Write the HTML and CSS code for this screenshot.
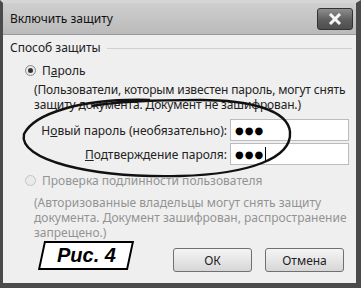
FILE: index.html
```html
<!DOCTYPE html>
<html lang="ru">
<head>
  <meta charset="UTF-8">
  <title>Включить защиту</title>
  <link rel="stylesheet" href="styles.css">
</head>
<body>
  <div class="window">
    <div class="titlebar">
      <span class="title">Включить защиту</span>
      <span class="close-btn">
        <svg width="14" height="12" viewBox="0 0 14 12">
          <path d="M2 1 L12 11 M12 1 L2 11" stroke="#f4f4f4" stroke-width="3"/>
        </svg>
      </span>
    </div>

    <div class="content">
      <div class="group-title">
        <span>Способ защиты</span>
        <span class="group-line"></span>
      </div>

      <label class="radio-row">
        <span class="radio checked"></span>
        <span>П<u>а</u>роль</span>
      </label>
      <p class="note tight">(Пользователи, которым известен пароль, могут снять защиту документа. Документ не зашифрован.)</p>

      <div class="field-row">
        <span class="field-label">Н<u>о</u>вый пароль (необязательно):</span>
        <span class="field">&#9679;&#9679;&#9679;</span>
      </div>
      <div class="field-row second">
        <span class="field-label"><u>П</u>одтверждение пароля:</span>
        <span class="field">&#9679;&#9679;&#9679;<span class="caret"></span></span>
      </div>

      <label class="radio-row disabled">
        <span class="radio"></span>
        <span>Проверка подлинности пользователя</span>
      </label>
      <p class="note disabled">(Авторизованные владельцы могут снять защиту документа. Документ зашифрован, распространение запрещено.)</p>

      <div class="footer">
        <div class="fig-label"><span>Рис. 4</span></div>
        <div class="buttons">
          <span class="btn">ОК</span>
          <span class="btn">Отмена</span>
        </div>
      </div>
    </div>

    <!-- hand-drawn ellipse around the password fields -->
    <svg class="ellipse" width="361" height="288" viewBox="0 0 361 288">
      <path d="M150 100 C80 98 34 114 24 134 C18 160 90 178 180 176 C250 174 292 158 290 132 C288 110 250 100 200 100 C160 100 120 101 92 106"
            fill="none" stroke="#111" stroke-width="2.4"/>
    </svg>
  </div>
</body>
</html>
```

FILE: styles.css
```css
body {
  margin: 0;
  background: #fff;
  font-family: 'Noto Sans', 'DejaVu Sans', sans-serif;
  font-size: 12px;
  color: #222;
}

.window {
  position: relative;
  width: 361px;
  height: 288px;
  box-sizing: border-box;
  background: #efefef;
  border: 3px solid #4a4a4a;
  border-top: 3px solid #d6d6d6;
  border-right-width: 5px;
  border-bottom-width: 5px;
  overflow: hidden;
}

.titlebar {
  height: 31px;
  display: flex;
  align-items: center;
  justify-content: space-between;
  padding: 0 3px 0 7px;
  background: linear-gradient(#cfcfcf, #bababa);
  border-bottom: 1px solid #9a9a9a;
}

.title {
  font-size: 12px;
  color: #111;
}

.close-btn {
  width: 34px;
  height: 20px;
  display: flex;
  align-items: center;
  justify-content: center;
  border: 1px solid #333;
  border-radius: 3px;
  background: linear-gradient(#8e8e8e, #5e5e5e 55%, #4e4e4e);
}

.content {
  padding: 3px 4px 0 7px;
}

.group-title {
  display: flex;
  align-items: center;
  gap: 6px;
  height: 18px;
}

.group-line {
  flex: 1;
  border-top: 1px solid #d0d0d0;
  margin-top: 2px;
}

.radio-row {
  display: flex;
  align-items: center;
  gap: 6px;
  margin: 6px 0 0 15px;
  height: 16px;
}

.radio {
  width: 11px;
  height: 11px;
  border-radius: 50%;
  border: 1px solid #8a8a8a;
  background: radial-gradient(#fff, #d8d8d8);
  box-sizing: border-box;
  position: relative;
}

.radio.checked::after {
  content: '';
  position: absolute;
  left: 2px;
  top: 2px;
  width: 5px;
  height: 5px;
  border-radius: 50%;
  background: #333;
}

.note {
  margin: 4px 0 0 24px;
  line-height: 15px;
}

.note.tight {
  letter-spacing: -0.15px;
  margin-right: -4px;
}

.disabled {
  color: #939393;
}

.disabled .radio {
  border-color: #c4c4c4;
  background: #eaeaea;
}

.field-row {
  display: flex;
  align-items: center;
  justify-content: flex-end;
  gap: 3px;
  margin: 7px 3px 0 0;
}

.field-row.second {
  margin-top: 2px;
}

.field {
  width: 119px;
  height: 22px;
  box-sizing: border-box;
  display: flex;
  align-items: center;
  padding-left: 4px;
  background: #fff;
  border: 1px solid #bcbcbc;
  font-size: 10px;
  letter-spacing: 1px;
  color: #000;
}

.caret {
  width: 1px;
  height: 14px;
  background: #000;
  margin-left: 1px;
}

.radio-row.disabled {
  margin-top: 7px;
}

.note.disabled {
  margin-top: 7px;
}

.footer {
  display: flex;
  align-items: flex-start;
  justify-content: space-between;
  margin-top: 1px;
}

.fig-label {
  margin-left: 31px;
  width: 86px;
  height: 25px;
  border: 2px solid #000;
  transform: skewX(-12deg);
  display: flex;
  align-items: center;
  justify-content: center;
  background: #fff;
}

.fig-label span {
  transform: skewX(12deg);
  font-family: 'Liberation Sans', Arial, sans-serif;
  font-size: 20px;
  font-weight: bold;
  font-style: italic;
  color: #000;
}

.buttons {
  display: flex;
  gap: 13px;
  margin: 7px 8px 0 0;
}

.btn {
  width: 79px;
  height: 24px;
  box-sizing: border-box;
  display: flex;
  align-items: center;
  justify-content: center;
  border: 1px solid #707070;
  border-radius: 3px;
  background: linear-gradient(#f4f4f4, #e6e6e6 50%, #d6d6d6);
  color: #222;
}

.ellipse {
  position: absolute;
  left: -3px;
  top: -3px;
  pointer-events: none;
}
```
